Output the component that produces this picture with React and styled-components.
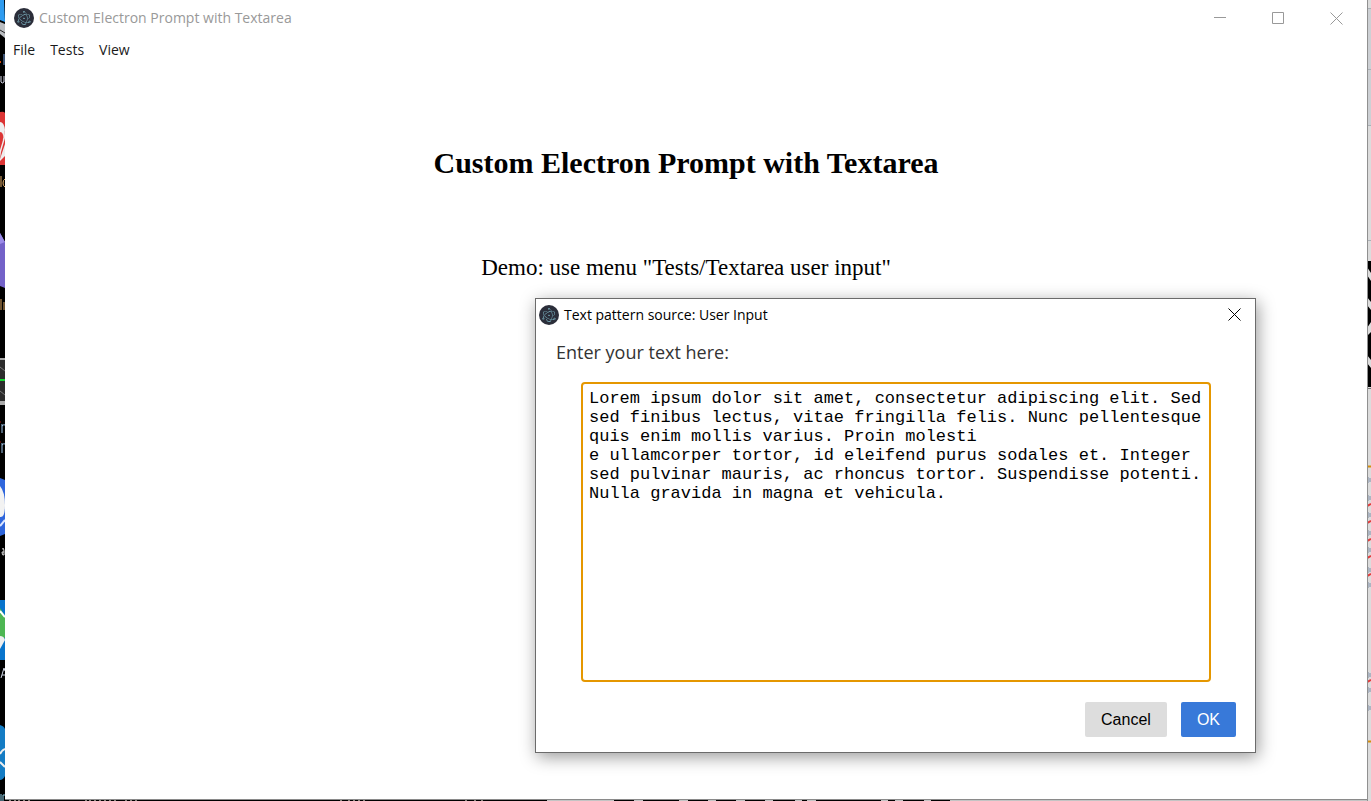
import React from "react";
import styled, { createGlobalStyle } from "styled-components";
import { SiElectron } from "react-icons/si";

const GlobalStyle = createGlobalStyle`
  * { box-sizing: border-box; }
  body { margin: 0; background: #000; }
`;

const UI_FONT = `"Open Sans", "Noto Sans", sans-serif`;

const Desktop = styled.div`
  display: grid;
  grid-template-columns: 5px minmax(0, 1fr) 4px;
  grid-template-rows: minmax(0, 1fr) 2px;
  height: 100vh;
  overflow: hidden;
`;

const SideStrip = styled.div`
  grid-column: ${(p) => p.$column};
  grid-row: 1 / 3;
  overflow: hidden;
  background: ${(p) => p.$color};
  svg { display: block; }
`;

const BottomStrip = styled.div`
  grid-column: 2;
  grid-row: 2;
  overflow: hidden;
  background: #c4c4c4;
  border-top: 1px solid #8a8a8a;
  svg { display: block; margin-top: -1px; }
`;

const AppWindow = styled.div`
  position: relative;
  grid-column: 2;
  grid-row: 1;
  background: #fff;
  overflow: hidden;
`;

const TitleBar = styled.header`
  display: flex;
  align-items: center;
  gap: 5px;
  height: ${(p) => (p.$dialog ? 32 : 36)}px;
  padding: 0 ${(p) => (p.$dialog ? "0 0 3px" : "2px 0 9px")};
  color: ${(p) => (p.$dialog ? "#000" : "#999")};
  font: 14px/20px ${UI_FONT};
`;

const TitleText = styled.span`
  flex: 1;
  white-space: nowrap;
`;

const CaptionButtons = styled.div`
  display: flex;
  align-self: stretch;
`;

const CaptionButton = styled.button`
  display: flex;
  align-items: center;
  justify-content: center;
  width: ${(p) => (p.$dialog ? 42 : 58)}px;
  padding: 0 0 ${(p) => (p.$dialog ? 1 : 0)}px;
  border: 0;
  background: none;
  color: inherit;
`;

const MenuBar = styled.nav`
  display: flex;
  gap: 15px;
  padding: 4px 8px;
`;

const MenuItem = styled.button`
  padding: 0;
  border: 0;
  background: none;
  color: #1a1a1a;
  font: 14px/20px ${UI_FONT};
`;

const Page = styled.main`
  padding-top: 80px;
  text-align: center;
  color: #000;
  font-family: "Liberation Serif", "Times New Roman", serif;
`;

const Heading = styled.h1`
  margin: 0 0 72px;
  font-size: 30px;
  line-height: 38px;
`;

const Hint = styled.p`
  margin: 0;
  font-size: 23px;
  line-height: 28px;
`;

const Dialog = styled.section`
  position: absolute;
  top: 298px;
  right: 111px;
  width: 721px;
  max-width: 90%;
  background: #fff;
  border: 1px solid #6b6b6b;
  box-shadow: 2px 4px 16px rgba(0, 0, 0, 0.4);
`;

const Form = styled.form`
  display: flex;
  flex-direction: column;
  padding: 8px 19px 15px 20px;
`;

const Label = styled.label`
  color: #333;
  font: 18px/26px ${UI_FONT};
`;

const TextInput = styled.textarea`
  display: block;
  height: 300px;
  margin: 17px 25px 20px;
  padding: 5px 6px;
  border: 2px solid #e59700;
  border-radius: 4px;
  outline: 0;
  resize: none;
  overflow: hidden;
  background: #fff;
  color: #000;
  font: 17px/19px "Liberation Mono", "Courier New", monospace;
`;

const Actions = styled.div`
  display: flex;
  justify-content: flex-end;
  gap: 14px;
`;

const ActionButton = styled.button`
  height: 35px;
  padding: 0 16px;
  border: 0;
  border-radius: 2px;
  background: ${(p) => (p.$primary ? "#3879d9" : "#ddd")};
  color: ${(p) => (p.$primary ? "#fff" : "#000")};
  font: 16px/20px "Liberation Sans", Arial, sans-serif;
`;

const ElectronBadge = styled.span`
  display: flex;
  align-items: center;
  justify-content: center;
  width: 20px;
  height: 20px;
  border-radius: 50%;
  background: #2b2e3a;
  color: #9feaf9;
`;

const ElectronIcon = () => (
  <ElectronBadge>
    <SiElectron size={14} aria-hidden="true" />
  </ElectronBadge>
);

const CaptionIcon = ({ d }) => (
  <svg width="13" height="13" viewBox="0 0 13 13" aria-hidden="true">
    <path d={d} fill="none" stroke="currentColor" />
  </svg>
);

const MINIMIZE = "M0 5.500H12";
const MAXIMIZE = "M0.500 0.500H11.500V11.500H0.500Z";
const CLOSE = "M0.500 0.500L12.500 12.500M12.500 0.500L0.500 12.500";

const LeftArt = () => (
  <svg width="5" height="801" viewBox="0 0 5 801" aria-hidden="true">
    <path d="M0 0H4L5 22L0 20Z" fill="#2f9cf0" />
    <path d="M0 22L5 24V38L0 34Z" fill="#b9bcc0" />
    <path d="M0 30L5 33" stroke="#222" />
    <path d="M4 54V65" stroke="#7aa6e8" />
    <path d="M0 62H1" stroke="#d04a10" strokeWidth="2" />
    <path d="M1 76V82Q2 84 4 82V76" stroke="#d8d8e8" fill="none" />
    <path d="M0 112Q4 111 5 113V165H0Z" fill="#dc3535" />
    <path d="M0 122Q4 122 5 130L2 143L5 131V138L1 152L0 159V150L3 140Q4 132 0 132Z" fill="#eee" />
    <path d="M0 159L5 144V156L0 161Z" fill="#eee" />
    <path d="M1 176V187M5 179Q3 180 3 183T5 187" stroke="#e8b06a" fill="none" />
    <path d="M0 233L5 242V288L0 286Z" fill="#7362c8" />
    <path d="M0 233L5 242L0 244Z" fill="#9b8be8" />
    <path d="M1 299V310M4 302V310" stroke="#e0a860" />
    <path d="M0 358H5V405H0Z" fill="#2c2c2c" />
    <path d="M0 359H5M0 402H5M0 404H5" stroke="#aaa" strokeWidth="2" />
    <path d="M0 367L5 371M0 391L5 395" stroke="#777" />
    <path d="M0 380H5" stroke="#12d430" strokeWidth="2" />
    <path d="M2 424V433M2 426Q4 424 5 425M2 443V453M2 445Q4 443 5 444" stroke="#9fc4ea" fill="none" />
    <path d="M0 422H1M0 442H1" stroke="#a01010" />
    <path d="M0 478L5 480V534L0 536Z" fill="#2f66dc" />
    <path d="M0 486Q5 492 5 505T0 517Z" fill="#f2f2f2" />
    <path d="M0 526L5 520" stroke="#dce6ff" strokeWidth="2" />
    <path d="M2 549Q4 547 4 551V555Q2 556 2 552H4" stroke="#ddd" fill="none" />
    <path d="M0 600H5V660H0Z" fill="#0874cc" />
    <path d="M0 608L5 616V637L0 646Z" fill="#4db653" />
    <path d="M0 636Q4 636 5 640L0 649Z" fill="#eee" />
    <path d="M0 611L5 617" stroke="#fff" strokeWidth="2" />
    <path d="M1 678L4 668L5 671M2 675H5" stroke="#cfd6e4" fill="none" />
    <path d="M0 725Q4 726 5 729V776Q3 780 0 780Z" fill="#147cc4" />
    <path d="M0 754Q2 750 5 749M0 762L5 767" stroke="#eee" strokeWidth="2" fill="none" />
    <path d="M1 794V801M3 801V795H5" stroke="#8fd0e8" fill="none" />
  </svg>
);

const SQUIGGLES = [505, 522, 540, 557, 575, 681];
const GLYPHS = [480, 498, 515, 533, 550, 570, 585, 675, 690, 708];

const RightArt = () => (
  <svg width="4" height="801" viewBox="0 0 4 801" aria-hidden="true">
    <path d="M0 8H4V125H0Z" fill="#cdd0d4" />
    <path d="M0 8.500H4M0 69.500H4M0 125.500H4M0 240.500H4" stroke="#aab0b6" />
    <path d="M0 261H4V387H0Z" fill="#000" />
    <path d="M0 267L4 273V281L0 275ZM0 297L4 302V310L0 305ZM0 328L4 322V332L0 336ZM0 355L4 360V368L0 363Z" fill="#dcdcdc" />
    <path d="M0 388.500H4" stroke="#777" />
    <path d="M0 466.500H4M0 741.500H4" stroke="#d58e0c" strokeWidth="2" />
    {GLYPHS.map((y) => (
      <path key={y} d={`M1 ${y - 3}V${y + 3}M3 ${y - 2}V${y + 2}`} stroke="#7d8da8" />
    ))}
    {SQUIGGLES.map((y) => (
      <path key={y} d={`M0 ${y + 1}L4 ${y - 1}`} stroke="#e23b3b" strokeWidth="2" />
    ))}
    <path d="M0.500 0V801" stroke="#909090" />
  </svg>
);

const LABEL_MARKS = [4, 9, 13, 18, 23, 80, 84, 89, 94, 99, 104, 109, 120, 125, 130, 335, 343, 348, 353, 358, 460, 469, 476];
const LOGO_MARKS = [
  [609, 629], [638, 674], [683, 703], [711, 731], [740, 760], [768, 790],
  [797, 802], [811, 876], [883, 890], [898, 919], [926, 945],
];

const BottomArt = () => (
  <svg width="960" height="2" viewBox="0 0 960 2" aria-hidden="true">
    <path d="M0 0H542V2H0Z" fill="#000" />
    {LABEL_MARKS.map((x) => (
      <path key={x} d={`M${x} 0H${x + 2}V2H${x}Z`} fill="#8a867e" />
    ))}
    {LOGO_MARKS.map(([a, b]) => (
      <path key={a} d={`M${a} 0H${b}V2H${a}Z`} fill="#000" />
    ))}
  </svg>
);

const SAMPLE_TEXT =
  "Lorem ipsum dolor sit amet, consectetur adipiscing elit. Sed sed finibus lectus, vitae fringilla felis. Nunc pellentesque quis enim mollis varius. Proin molesti\n" +
  "e ullamcorper tortor, id eleifend purus sodales et. Integer sed pulvinar mauris, ac rhoncus tortor. Suspendisse potenti. Nulla gravida in magna et vehicula.";

const MENUS = ["File", "Tests", "View"];

export default function App() {
  return (
    <>
      <GlobalStyle />
      <Desktop>
        <SideStrip $column={1} $color="#000">
          <LeftArt />
        </SideStrip>
        <AppWindow>
          <TitleBar>
            <ElectronIcon />
            <TitleText>Custom Electron Prompt with Textarea</TitleText>
            <CaptionButtons>
              <CaptionButton type="button" aria-label="Minimize">
                <CaptionIcon d={MINIMIZE} />
              </CaptionButton>
              <CaptionButton type="button" aria-label="Maximize">
                <CaptionIcon d={MAXIMIZE} />
              </CaptionButton>
              <CaptionButton type="button" aria-label="Close">
                <CaptionIcon d={CLOSE} />
              </CaptionButton>
            </CaptionButtons>
          </TitleBar>
          <MenuBar>
            {MENUS.map((name) => (
              <MenuItem type="button" key={name}>{name}</MenuItem>
            ))}
          </MenuBar>
          <Page>
            <Heading>Custom Electron Prompt with Textarea</Heading>
            <Hint>Demo: use menu "Tests/Textarea user input"</Hint>
          </Page>
          <Dialog role="dialog" aria-labelledby="prompt-title">
            <TitleBar $dialog>
              <ElectronIcon />
              <TitleText id="prompt-title">Text pattern source: User Input</TitleText>
              <CaptionButtons>
                <CaptionButton $dialog type="button" aria-label="Close prompt">
                  <CaptionIcon d={CLOSE} />
                </CaptionButton>
              </CaptionButtons>
            </TitleBar>
            <Form onSubmit={(e) => e.preventDefault()}>
              <Label htmlFor="prompt-text">Enter your text here:</Label>
              <TextInput id="prompt-text" spellCheck={false} defaultValue={SAMPLE_TEXT} />
              <Actions>
                <ActionButton type="button">Cancel</ActionButton>
                <ActionButton type="submit" $primary>OK</ActionButton>
              </Actions>
            </Form>
          </Dialog>
        </AppWindow>
        <SideStrip $column={3} $color="#dcdcdc">
          <RightArt />
        </SideStrip>
        <BottomStrip>
          <BottomArt />
        </BottomStrip>
      </Desktop>
    </>
  );
}
